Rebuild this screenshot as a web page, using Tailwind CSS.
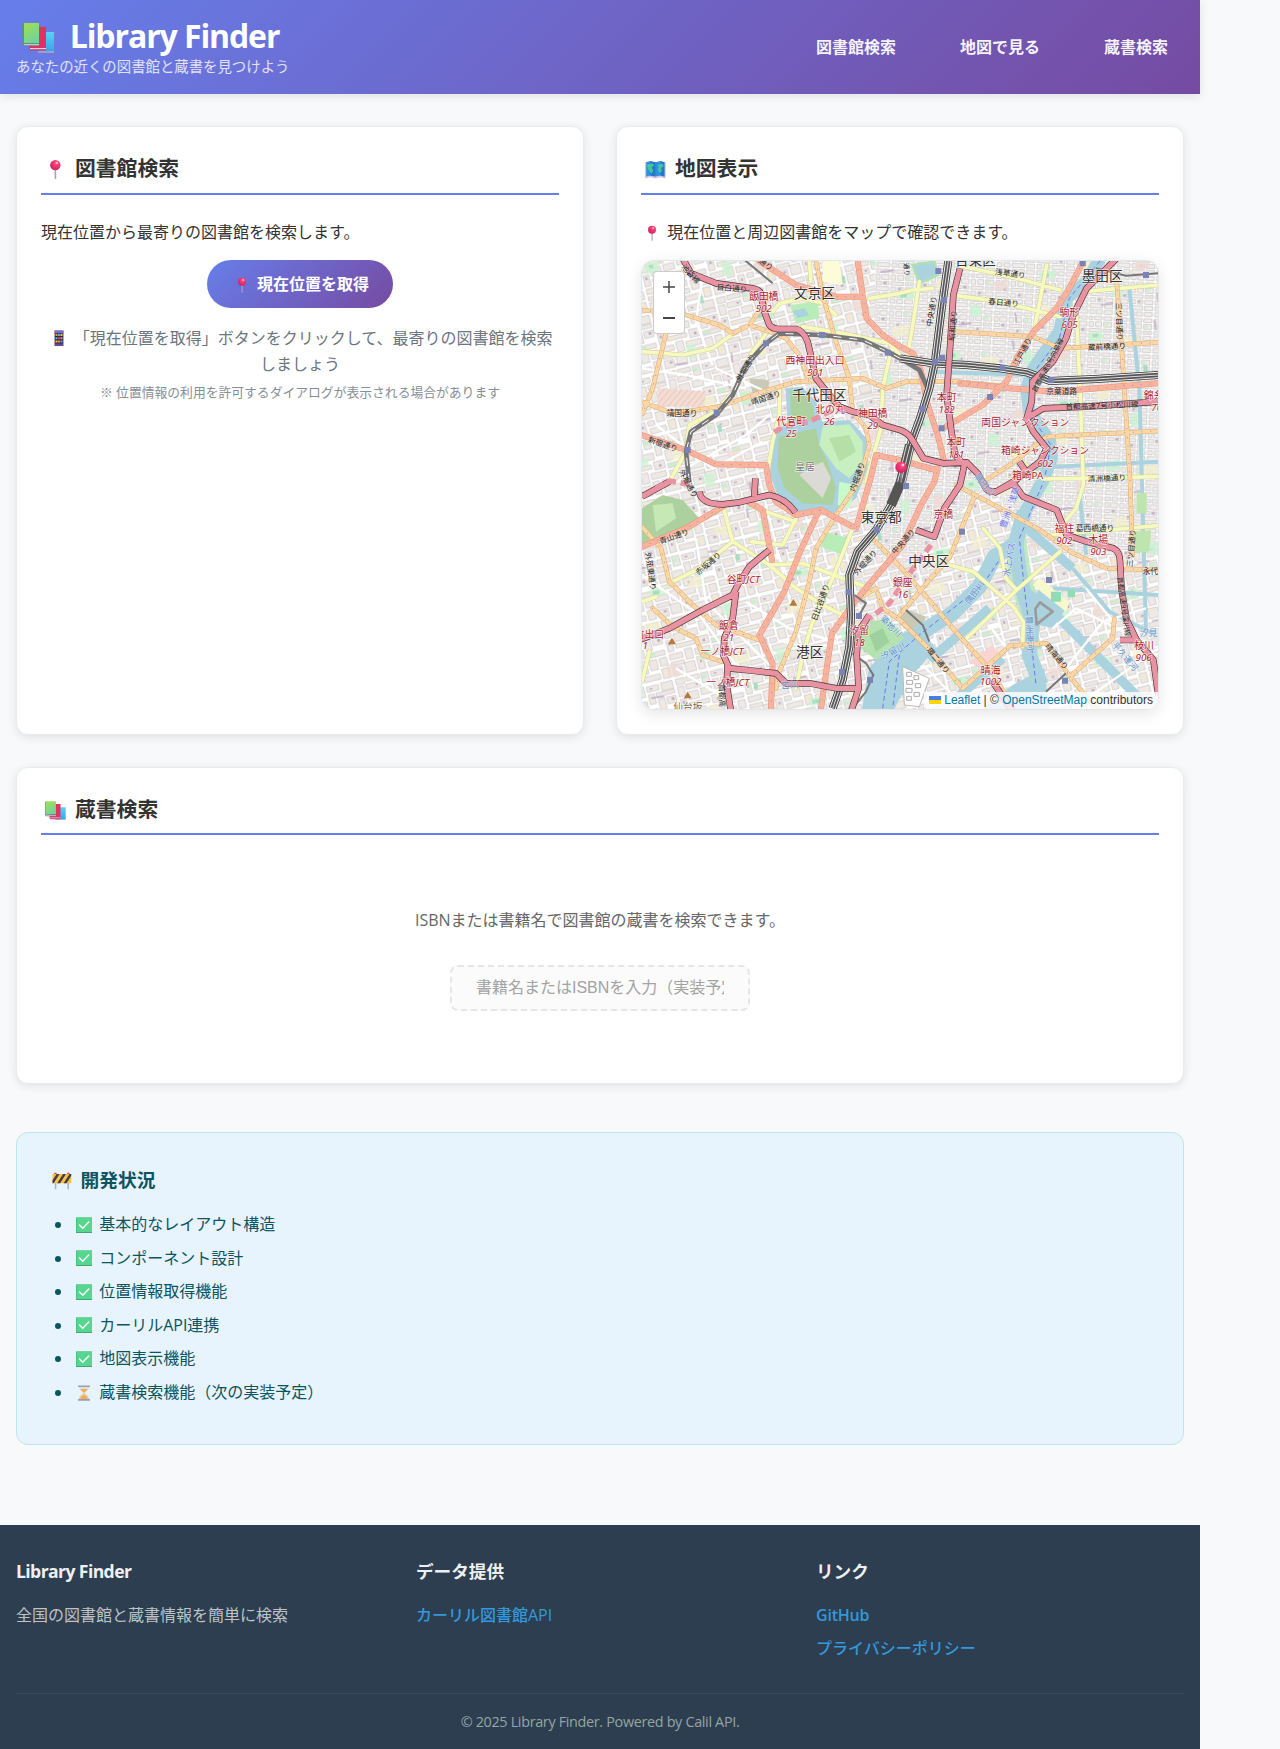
<!DOCTYPE html>
<html lang="ja">
<head>
<meta charset="utf-8">
<title>Library Finder</title>
<script src="https://cdn.jsdelivr.net/npm/@tailwindcss/browser@4"></script>
</head>
<body class="bg-[#f8f9fa] text-[#333] text-base leading-[1.6] font-['Open_Sans','Noto_Sans_CJK_JP',sans-serif]">
<svg class="absolute h-0 w-0">
  <defs>
    <linearGradient id="gGreen" x1="0" y1="0" x2="0.4" y2="1"><stop offset="0" stop-color="#a4e04c"/><stop offset="1" stop-color="#6fd49a"/></linearGradient>
    <linearGradient id="gBlue" x1="0" y1="0" x2="0" y2="1"><stop offset="0" stop-color="#55d5f5"/><stop offset="1" stop-color="#3aa5ea"/></linearGradient>
    <radialGradient id="gBall" cx=".62" cy=".3" r=".75"><stop offset="0" stop-color="#ff7d9f"/><stop offset=".3" stop-color="#fb3c74"/><stop offset="1" stop-color="#c8215c"/></radialGradient>
    <linearGradient id="gSand" x1="0" y1="0" x2="0" y2="1"><stop offset="0" stop-color="#d9e3ec"/><stop offset="1" stop-color="#f0c48a"/></linearGradient>
    <symbol id="books" viewBox="0 0 44 32">
      <path d="M23 11h15v19H22z" fill="url(#gBlue)"/><path d="M22 30h16v2H22z" fill="#a99bc9"/>
      <path d="M14 6h16v21H13z" fill="#e5305f"/><path d="M13 26h17v3.500H14z" fill="#c9386b"/><path d="M14 27h16v1.200H14z" fill="#f0cfe0"/>
      <path d="M8 2h15v20H8z" fill="url(#gGreen)"/><path d="M6.500 3 8 2v22l-1.500-1z" fill="#4da352"/><path d="M7 22h16v3H7z" fill="#6a8a82"/><path d="M8 23h15v1.200H8z" fill="#c9c3d8"/>
    </symbol>
    <symbol id="pin" viewBox="0 0 44 32">
      <path d="M21 14h2.400v16.500l-1.200 1.500-1.200-1.500z" fill="#aaa0b6"/>
      <circle cx="22" cy="9.500" r="8" fill="url(#gBall)"/><ellipse cx="24.500" cy="6" rx="1.800" ry="1.500" fill="#ffc4d3"/>
    </symbol>
    <symbol id="map" viewBox="0 0 44 32">
      <path d="m6 5 8-2 8 2 8-2 8 2v25l-8-2-8 2-8-2-8 2z" fill="#d3c6e4"/>
      <path d="m8 5 6-1.500 8 1.500 8-1.500 6 1.500v22l-6-1.500-8 1.500-8-1.500-6 1.500z" fill="#2f8fe0"/>
      <path d="M14 3.500 22 5v22l-8-1.500zM30 3.500 36 5v22l-6-1.500z" fill="#2577c8"/>
      <path d="M10 8l8-1 2 3-4 3 3 4-3 6-3-5-3-4zM26 9l7-2 2 4-4 3 1 5-3 3-3-5 1-4z" fill="#41c7a0"/>
    </symbol>
    <symbol id="calc" viewBox="0 0 44 32">
      <path d="M13 1h18v31H13z" fill="#6a4596"/><path d="M13 1h18v5H13z" fill="#7d73bd"/><path d="M14 7h16v20H14z" fill="#30264e"/>
      <path d="M15 8h4v4h-4zM25 14.500h4v4h-4zM20 21h4v4h-4z" fill="#f09a35"/><path d="M20 8h4v4h-4zM15 14.500h4v4h-4zM25 21h4v4h-4z" fill="#4bb2ea"/><path d="M25 8h4v4h-4zM15 21h4v4h-4z" fill="#f5c93e"/><path d="M20 14.500h4v4h-4z" fill="#e84868"/>
    </symbol>
    <symbol id="barrier" viewBox="0 0 44 32">
      <path d="M10 14h2.500v17H10zM31.500 14H34v17h-2.500z" fill="#b4a8c4"/><path d="M9 3h4v4H9zM31 3h4v4h-4z" fill="#e2356d"/>
      <path d="M6 5h32v16H6z" fill="#f9c23c"/><path d="M13 5h5L8 21H6v-5zM24 5h5L19 21h-5zM35 5h3v3l-8 13h-5z" fill="#433b4f"/>
    </symbol>
    <symbol id="check" viewBox="0 0 44 32">
      <path d="M6 1h32v31H6z" fill="#3fa873"/><path d="M7 1h31v29H7z" fill="#56d68f"/>
      <path d="m13 16 6.500 6.500L31.500 10" fill="none" stroke="#fff" stroke-width="2.800" stroke-linecap="round"/>
    </symbol>
    <symbol id="sand" viewBox="0 0 44 32">
      <path d="M12 3h20c0 7-6 10-8.500 13C26 19 32 22 32 29H12c0-7 6-10 8.500-13C18 13 12 10 12 3z" fill="url(#gSand)"/>
      <path d="M15 8h14c-2 4-5 5-7 7-2-2-5-3-7-7zM15 28c1-5 5-7 7-8 2 1 6 3 7 8z" fill="#f3ac4c"/>
      <path d="M10 1h24v3H10zM10 28h24v3.500H10z" fill="#93a3b5"/>
    </symbol>
  </defs>
</svg>

<div class="w-[1200px]">
  <header class="flex h-[94px] items-center justify-between bg-[linear-gradient(135deg,#667eea_0%,#764ba2_100%)] px-4 text-white shadow-[0_2px_10px_rgba(0,0,0,0.1)]">
    <div class="flex flex-col">
      <h1 class="text-[32px] font-bold leading-[38px] tracking-[-1.1px] whitespace-nowrap"><svg class="mr-[2.500px] inline-block h-[1em] w-[1.375em] align-[-0.16em]"><use href="#books"/></svg> Library Finder</h1>
      <p class="text-[14.4px] leading-[23px] text-white/80">あなたの近くの図書館と蔵書を見つけよう</p>
    </div>
    <nav class="flex gap-8 pt-0.5 font-semibold text-white/95">
      <a class="px-4 py-2">図書館検索</a>
      <a class="px-4 py-2">地図で見る</a>
      <a class="px-4 py-2">蔵書検索</a>
    </nav>
  </header>

  <main class="px-4 pt-8">
    <div class="grid grid-cols-2 gap-8">
      <section class="h-[609px] rounded-xl border border-[#e9ecef] bg-white p-6 shadow-[0_2px_10px_rgba(0,0,0,0.1)]">
        <h2 class="mb-6 border-b-2 border-[#667eea] pt-px pb-2 text-[20.8px] font-semibold leading-[33.3px]"><svg class="inline-block h-[1em] w-[1.375em] align-[-0.16em]"><use href="#pin"/></svg> 図書館検索</h2>
        <p class="pt-px">現在位置から最寄りの図書館を検索します。</p>
        <div class="mt-3.5 flex justify-center">
          <button class="h-12 w-[186px] rounded-full bg-[linear-gradient(135deg,#667eea_0%,#764ba2_100%)] pt-0.5 font-semibold text-white whitespace-nowrap"><svg class="inline-block h-[1em] w-[1.375em] align-[-0.16em]"><use href="#pin"/></svg> 現在位置を取得</button>
        </div>
        <p class="mt-[17px] text-center leading-[26px] text-[#6c757d]"><svg class="inline-block h-[1em] w-[1.375em] align-[-0.16em]"><use href="#calc"/></svg> 「現在位置を取得」ボタンをクリックして、最寄りの図書館を検索しましょう</p>
        <p class="mt-[5px] text-center text-[12.8px] text-[#868e96]">※ 位置情報の利用を許可するダイアログが表示される場合があります</p>
      </section>

      <section class="h-[609px] rounded-xl border border-[#e9ecef] bg-white p-6 shadow-[0_2px_10px_rgba(0,0,0,0.1)]">
        <h2 class="mb-6 border-b-2 border-[#667eea] pt-px pb-2 text-[20.8px] font-semibold leading-[33.3px]"><svg class="inline-block h-[1em] w-[1.375em] align-[-0.16em]"><use href="#map"/></svg> 地図表示</h2>
        <p class="pt-px"><svg class="inline-block h-[1em] w-[1.375em] align-[-0.16em]"><use href="#pin"/></svg> 現在位置と周辺図書館をマップで確認できます。</p>
        <div class="relative mt-3.5 h-[450px] overflow-hidden rounded-xl border border-[#e1e8ed] shadow-[0_4px_15px_rgba(0,0,0,0.1)]">
          <!-- Map of central Tokyo; drawn at three units per pixel -->
          <svg class="block h-full w-full font-['Noto_Sans','Noto_Sans_CJK_JP',sans-serif]" viewBox="18 18 1548 1344" preserveAspectRatio="none">
            <defs>
              <pattern id="blkA" width="198" height="180" patternUnits="userSpaceOnUse" patternTransform="rotate(-14)">
                <path d="M0 0h198v180H0z" fill="#fff"/>
                <path d="M4 4h26v18H4zM36 4h40v14H36zM82 4h22v30H82zM112 6h36v16h-36zM156 4h36v24h-36zM4 28h20v30H4zM30 26h44v16H30zM112 30h18v30h-18zM136 30h56v12h-56zM30 50h32v24H30zM70 48h34v20H70zM138 50h20v32h-20zM164 50h28v20h-28zM4 66h18v34H4zM30 82h60v12H30zM98 76h32v24H98zM138 90h54v14h-54zM4 108h40v16H4zM52 102h22v32H52zM82 108h46v18H82zM138 112h24v30h-24zM170 112h22v24h-22zM4 132h40v12H4zM82 134h20v38H82zM110 134h20v14h-20zM4 150h30v24H4zM42 142h32v30H42zM112 156h50v16h-50zM170 144h22v30h-22z" fill="#eee9e4" stroke="#c6c1c3" stroke-width="2"/>
                <path d="M84 10h14v12H84zM140 92h22v9h-22z" fill="#c9efcf"/><path d="M36 84h12v8H36zM172 150h14v12h-14z" fill="#f4e9c8"/>
                <path d="M60 30h7v5h-7zM120 12h9v4h-9zM10 72h6v9h-6zM112 86h8v8h-8zM178 54h8v8h-8zM20 155h9v6h-9zM90 145h5v8h-5z" fill="#bda8c2"/>
              </pattern>
              <pattern id="blkB" width="120" height="108" patternUnits="userSpaceOnUse" patternTransform="rotate(3)">
                <path d="M0 0h120v108H0z" fill="#fff"/>
                <path d="M3 3h16v11H3zM24 3h18v11H24zM48 3h10v11H48zM64 3h22v11H64zM92 3h24v11H92zM3 20h12v14H3zM20 20h22v14H20zM48 20h14v14H48zM68 20h18v14H68zM92 20h24v14H92zM3 40h18v10H3zM26 40h16v10H26zM48 40h38v10H48zM92 40h10v10H92zM107 40h9v10h-9zM3 56h39v12H3zM48 56h16v12H48zM70 56h16v12H70zM92 56h24v12H92zM3 74h15v12H3zM24 74h18v12H24zM48 74h38v12H48zM92 74h24v12H92zM3 92h39v12H3zM48 92h15v12H48zM68 92h18v12H68zM92 92h24v12H92z" fill="#f3eeeb" stroke="#bdb9bc" stroke-width="2"/>
                <path d="M26 42h9v5h-9zM72 58h7v6h-7z" fill="#bba8be"/><path d="M94 22h12v9H94z" fill="#cdf0d2"/>
              </pattern>
              <pattern id="scatter" width="430" height="390" patternUnits="userSpaceOnUse" patternTransform="rotate(-8)">
                <path d="M20 30h42v30H20zM250 60h28v40h-28zM330 220h50v22h-50zM110 290h30v36h-30z" fill="#c8f4cf"/><path d="M33 36h14v10H33zM338 226h20v12h-20zM170 150h12v20h-12z" fill="#94d9b5"/>
                <path d="M120 60h50v26h-50zM20 200h38v34H20zM300 320h48v32h-48z" fill="#f3efcf"/><path d="M350 60h34v40h-34zM190 230h40v26h-40z" fill="#efd9d4"/>
                <path d="M90 130h30v5H90zM220 20h6v28h-6zM290 150h40v6h-40zM70 340h38v6H70zM240 330h5v30h-5z" fill="#bca8c4"/>
              </pattern>
              <pattern id="hatch" width="14" height="14" patternUnits="userSpaceOnUse" patternTransform="rotate(40)"><path d="M0 0h14v14H0z" fill="#f2ddd5"/><path d="M0 0h2v14H0z" fill="#efb9ad"/></pattern>
              <path id="secondary" d="M18 290 140 300 230 280 300 230M410 170 430 145 500 130 560 145 600 180M410 210 350 290 300 400 240 470 160 510 150 590 100 680M430 400 430 480 410 560 395 650M500 215 620 235 760 265 792 300M770 265 740 400 735 520 690 680M520 18 525 80M700 130 792 115 830 105 890 100M850 80 832 200 815 300M962 30 1142 70 1272 105M962 122 1092 140 1272 185M1232 30 1192 240M1342 110 1567 90M1320 150 1332 400 1342 690 1320 760 1270 820M1122 590 1222 672 1567 665M1242 840 1567 812M1272 890 1142 1005 992 1150M942 930 1012 950 1132 1055 1162 1100 1160 1175M1042 820 1092 880 1110 970 1142 1005M100 985 190 940 290 860 260 750M290 860 400 930 500 925 620 970 700 1000M400 930 480 1000 560 1050 640 1090M360 760 480 800M345 860 440 870 480 790M650 820 590 970 530 1100 500 1200 480 1300M18 1040 60 1025M18 1280 40 1190"/>
              <path id="primary" d="M18 440 110 475 180 465 250 455 380 410 480 380 680 370 750 400 810 380 962 380 1112 395M18 165 150 180 250 210 290 235 340 210 400 230 450 250 490 300 520 380M340 210 375 160 400 120M90 235 50 400 20 475M540 18 560 120 600 260 640 370 650 470 690 520 700 570 670 680 600 780 540 880 520 980 480 1130 430 1250 420 1300M18 815 75 880 100 980 170 1050 240 1110 370 1155M50 1060 110 1115 180 1150 200 1200 260 1220M952 230 1192 245 1272 280 1567 262M1042 680 1122 630 1232 545 1567 528M1442 80 1460 320 1482 675 1490 900M960 690 1122 775 1212 825 1312 895 1412 940 1567 945M1015 725 942 905 850 1010 792 1080M700 840 792 935 862 1015 972 1145 1072 1255M660 1035 720 1000 740 1060 792 1095 882 1185 980 1300 1122 1172 1232 1165 1302 1265 1380 1360M1302 1265 1430 1150 1435 1090M1072 1255 1130 1360"/>
              <path id="trunk" d="M370 18 480 90 600 125 680 125M665 18 680 120 692 190 740 240 792 275 832 295 855 350 875 450 905 540 925 620M18 540 150 585 240 628 390 630 400 690 420 740 480 780 555 765 650 815M550 765 490 895 445 1010 370 1140 410 1225 405 1360M18 875 150 820 260 755M335 740 380 765 408 915M555 1360 575 1220 588 1135 660 1035 800 870 855 750 895 680 905 640M662 815 705 665 720 600 790 615 900 645M1342 18 1300 100 1262 160 1192 230 1142 310 1112 380 1040 450 930 515M972 385 1122 400 1252 410 1567 385"/>
              <path id="rail" d="M792 310 892 325 992 330 1092 340 1172 352 1242 378 1380 372 1567 360M937 18 917 160 897 320 880 400 852 490 812 600 790 690 765 750 720 825 665 890 640 960 645 1080 640 1175 620 1275 590 1360"/>
              <path id="motorway" d="M140 10 165 55 240 85 350 100Q375 105 375 120L385 170 400 210Q410 222 430 222L480 222Q500 225 515 260L540 370 580 420 610 455 650 470 700 480 740 510 792 525Q820 535 832 560L862 610 922 625 992 622 1025 655 1050 700Q1060 715 1085 708L1132 685 1162 725 1262 765 1292 840 1352 860 1432 880Q1452 890 1452 920L1457 1005 1472 1095 1502 1155 1552 1215 1567 1320M972 40 952 120 942 280 932 420 945 520 957 600 985 630 972 690 925 760 895 845 840 825M1442 10 1352 100 1312 180 1290 250 1250 320 1190 380 1187 440 1172 490 1192 530 1232 580 1212 620 1140 675 1072 715M1172 490 1222 460 1352 455 1567 440M18 725 100 680M190 710Q195 748 260 748L310 742 400 720Q450 730 478 772M358 670 355 725M10 1155 100 1120 200 1065 290 1020 305 990 340 935 400 885M300 1010 290 1090 265 1150 262 1200 280 1240 330 1245 420 1255 450 1285 520 1285 600 1300 665 1300M275 1230 272 1290 285 1370M700 1080 667 1130 662 1200 668 1300 645 1370M1070 1280 1130 1370M1150 620 1170 650M1452 1155 1502 1155"/>
            </defs>
            <path d="M0 0h1600v1400H0z" fill="url(#blkA)"/>
            <path d="M720 0H1600V900H1250L1050 690 830 930 700 900z" fill="url(#blkB)"/>
            <path d="M0 0h1600v1400H0z" fill="url(#scatter)" opacity=".75"/>
            <path d="M65 400 210 408 205 455H65z" fill="url(#hatch)"/>
            <path d="M18 760 80 720 140 735 190 790 150 815 18 870z" fill="#add19e"/>
            <path d="M50 750 110 745 120 790 60 830z" fill="#c5e8b5"/>
            <path d="M462 150 545 140 550 190 480 205zM565 830 640 850 620 900 555 875z" fill="#b8ecb9"/><path d="M470 168 505 160 520 180 485 190z" fill="#aad3df"/>
            <path d="M560 18 610 18 620 90 560 80z" fill="#fdfcd8"/><path d="M340 370 400 375 395 425 350 415zM792 1055 870 1085 850 1130 792 1110z" fill="#c9c9b8"/>
            <path d="M830 30 895 20 905 60 850 85z" fill="#aad3df" stroke="#aee0b5" stroke-width="8"/>
            <!-- Imperial palace grounds and moats -->
            <path d="M448 400 500 395 540 440 560 500 640 495 692 550 695 640 660 730 600 775 540 765 480 770 430 735 402 660 412 540 455 500z" fill="#aad3df"/>
            <path d="M462 405 500 410 530 450 535 500 465 490zM428 545 540 520 550 570 575 620 600 700 590 750 500 745 445 700 425 640z" fill="#add19e"/>
            <path d="M560 515 640 508 680 560 680 620 640 670 600 640 550 570z" fill="#c8efc0"/><path d="M580 550 640 540 660 590 610 620z" fill="#b6dfa8"/>
            <path d="M520 640 560 620 585 670 560 730 520 690 490 660z" fill="#dcdad6"/><path d="M610 680 660 690 640 760 605 750z" fill="#c8facc"/>
            <!-- Rivers, canals and the bay -->
            <g fill="none" stroke="#aad3df" stroke-linejoin="round">
              <path stroke="#bfe8c4" stroke-width="66" d="M1137 850 1150 950 1190 1100"/>
              <path stroke-width="38" d="M1392 10 1352 80 1292 130 1270 230 1192 340 1172 400 1180 470 1242 560 1247 610 1222 675 1165 775 1137 860"/>
              <path stroke-width="46" d="M1165 770 1137 870 1075 905 1030 995 950 1075 850 1135 792 1175 720 1250 700 1370"/>
              <path stroke-width="46" d="M1137 850 1150 950 1162 1010 1190 1100 1180 1200 1215 1290"/>
              <path stroke-width="28" d="M1170 1010 1250 1070 1350 1170 1520 1340M1150 800 1240 880 1310 940M880 1215 980 1130 1060 1060M960 1330 1100 1210"/>
              <path stroke-width="12" d="M900 350 1160 360M1170 640 1567 620M1480 100 1510 400 1530 1130M1250 1000 1567 1020M1310 940 1420 1070 1560 1140M1330 710 1350 900"/>
            </g>
            <path d="M1215 985 1290 1060 1250 1120 1170 1100zM1225 1240 1240 1370 1030 1370 1130 1290zM740 1150 850 1120 900 1180 830 1260 770 1370 680 1370 710 1240z" fill="#aad3df"/>
            <path d="M800 1235 880 1270 850 1355 805 1350z" fill="#fff" stroke="#bbb" stroke-width="3"/><path d="M812 1252h14v12h-14zM834 1262h14v12h-14zM812 1276h18v12h-18zM838 1286h16v12h-16zM810 1300h18v12h-18zM834 1312h16v12h-16zM812 1324h14v12h-14z" fill="none" stroke="#aaa" stroke-width="3"/>
            <path d="M680 1105 755 1090 805 1150 720 1215 675 1180z" fill="#b5e3b0"/><path d="M700 1140 740 1120 760 1160 720 1190z" fill="#9fd0a0"/>
            <path d="M1198 1062 1212 1042 1250 1070 1202 1108z" fill="none" stroke="#9b9b9b" stroke-width="8" stroke-linejoin="round"/>
            <path d="M1210 970 1300 1040 1290 1070 1190 990z" fill="#f7f8cc"/><path d="M1245 1010h30v30h-30zM1295 1005h22v22h-22z" fill="#8fdcb5"/>
            <path d="M1502 715h30v60h-30zM1492 830 1545 825 1540 890 1498 895z" fill="#bfe5af"/>
            <path d="M1000 1220 1070 1170 1090 1200 1030 1240z" fill="#f9d4d0"/>
            <path fill="none" stroke="#6a74f0" stroke-width="3" stroke-dasharray="14 9" d="M1392 18 1300 130 1270 250 1180 370 1190 490 1245 570 1225 675 1150 850 1165 1000 1190 1200 1200 1290M1100 900 1040 990 850 1140 760 1220 740 1360M790 1200 770 1360"/>
            <!-- Minor streets -->
            <path fill="none" stroke="#fff" stroke-width="7" d="M18 340 150 360 330 400M200 60 180 200 230 330M60 510 230 640 380 560M240 340 390 410M150 640 330 540 400 480M18 960 190 1080 300 1230M120 1240 300 1350M330 1040 460 1120 600 1160M420 880 460 980 420 1060M1290 1240 1400 1100 1530 1060M1250 1120 1320 1060 1567 1180M1310 1360 1567 1180M1060 1110 1110 1180M1350 1000 1440 1110M860 1230 1000 1370M180 850 210 1040 400 1230M440 1160 530 1180 620 1160"/>
            <g fill="none" stroke-linejoin="round" stroke-linecap="round">
              <use href="#secondary" stroke="#cfd09c" stroke-width="14"/><use href="#secondary" stroke="#f7fabf" stroke-width="11"/>
              <use href="#primary" stroke="#d9ad74" stroke-width="14"/><use href="#primary" stroke="#fcd6a4" stroke-width="11"/>
              <use href="#trunk" stroke="#e8927c" stroke-width="18"/><use href="#trunk" stroke="#f9b29c" stroke-width="15"/>
              <g stroke="#8d86b8" stroke-width="3" stroke-dasharray="0 26"><use href="#primary"/><use href="#trunk"/></g>
            </g>
            <g fill="none" stroke-linejoin="round">
              <path stroke="#77777a" stroke-width="14" d="M160 680 150 590 165 530 240 480 290 420 330 330 390 265 430 235 560 240 680 255 755 290 792 310 892 325M792 310 850 345 875 400"/>
              <path stroke="#fff" stroke-width="3" stroke-dasharray="24 24" d="M160 680 150 590 165 530 240 480 290 420 330 330 390 265 430 235 560 240 680 255 755 290 792 310"/>
              <use href="#rail" stroke="#333" stroke-width="24"/><use href="#rail" stroke="#f2f2f2" stroke-width="19"/><use href="#rail" stroke="#555" stroke-width="13"/><use href="#rail" stroke="#ddd" stroke-width="3"/>
              <path stroke="#555" stroke-width="30" d="M822 570 795 680 765 750"/><path stroke="#ddd" stroke-width="3" d="M812 570 785 680M822 572 795 682M832 575 806 685"/>
              <path stroke="#777" stroke-width="6" d="M320 10 410 85M650 1195 690 1225 712 1260 690 1310 650 1360M655 1020 690 1045 670 1080M1230 1310 1290 1255M1380 40 1470 62 1567 55M810 1065 860 1110 880 1160"/>
              <use href="#motorway" stroke="#4e3539" stroke-width="20"/><use href="#motorway" stroke="#e892a2" stroke-width="16"/>
              <path stroke="#e892a2" stroke-width="16" stroke-dasharray="26 14" d="M415 532 440 515 520 500 590 465 610 455M60 700 100 678 170 690M885 870 825 950 760 1045 700 1090"/>
            </g>
            <path fill="#7b82b5" d="M381 256h18v18h-18zM549 231h18v18h-18zM233 464h18v18h-18zM146 576h18v18h-18zM747 284h18v18h-18zM898 39h18v18h-18zM915 126h18v18h-18zM888 311h18v18h-18zM910 299h18v18h-18zM1091 329h18v18h-18zM1236 366h18v18h-18zM1053 417h18v18h-18zM908 511h18v18h-18zM851 453h18v18h-18zM1331 16h18v18h-18zM1521 51h18v18h-18zM713 816h18v18h-18zM629 1002h18v18h-18zM660 1074h18v18h-18zM609 1242h18v18h-18zM693 1266h18v18h-18zM801 684h18v18h-18zM969 821h18v18h-18zM1230 966h18v18h-18zM1278 1268h18v18h-18z"/>
            <path fill="#b5793a" d="m108 1148 12 20H96zM155 1310l12 20h-24zM472 1032l12 20h-24z"/>

            <g font-size="23" fill="#222" text-anchor="middle" stroke="#fff" stroke-opacity=".25" stroke-width="3" paint-order="stroke">
              <text transform="translate(287 108) rotate(5)">目白通り</text><text transform="translate(158 62) rotate(48)">池袋線</text><text transform="translate(385 34) rotate(35)">通り</text>
              <text transform="translate(336 342) rotate(-58)">外堀通り</text><text transform="translate(392 436) rotate(-18)">靖国通り</text><text transform="translate(138 482)">靖国通り</text>
              <text transform="translate(78 575) rotate(19)">新宿通り</text><text transform="translate(672 668) rotate(-70)">内堀通り</text><text transform="translate(150 690) rotate(62)">外堀通り</text>
              <text transform="translate(895 170) rotate(-80)">中央通り</text><text transform="translate(959 212) rotate(-85)">昭和通り</text><text transform="translate(1122 64) rotate(8)">浅草通り</text>
              <text transform="translate(1102 151) rotate(5)">春日通り</text><text transform="translate(1167 294) rotate(-62)">江戸通り</text><text transform="translate(1413 283) rotate(-3)">蔵前橋通り</text>
              <text transform="translate(1441 200) rotate(88)">三ツ目通り</text><text transform="translate(1242 334) rotate(-62)" font-size="21">首都高速6号向島線</text><text transform="translate(1277 418)">京葉道路</text>
              <text transform="translate(1398 460) rotate(-2)">首都高速7号小松川線</text><text transform="translate(1413 678) rotate(-2)">清洲橋通り</text><text transform="translate(1377 827)">葛西橋通り</text>
              <text transform="translate(1494 880) rotate(-85)">三ツ目通り</text><text transform="translate(1543 956)">永代</text><text transform="translate(1456 1055) rotate(82)" font-size="21">首都高速9号深川線</text>
              <text transform="translate(1256 1210) rotate(50)">晴海通り</text><text transform="translate(900 1222) rotate(50)">環二通り</text><text transform="translate(117 852) rotate(-20)">青山通り</text>
              <text transform="translate(222 932) rotate(-40)">赤坂通り</text><text transform="translate(36 950) rotate(82)">外苑東通り</text><text transform="translate(561 1045) rotate(-70)">日比谷通り</text>
              <text transform="translate(694 928) rotate(-48)">外堀通り</text><text transform="translate(808 865) rotate(-48)">中央通り</text><text transform="translate(250 1322) rotate(88)">首都高</text><text transform="translate(805 44) rotate(85)" font-size="20">通り</text>
            </g>
            <g font-size="26" fill="#5f94c8" text-anchor="middle" stroke="#fff" stroke-opacity=".5" stroke-width="3" paint-order="stroke">
              <text transform="translate(1024 1018) rotate(-55)">隅田川</text><text transform="translate(758 1120) rotate(45)">築地川</text><text transform="translate(775 1196) rotate(-28)">汐留川</text><text x="462" y="1300">古川</text>
              <text transform="translate(1172 1135) rotate(88)">豊洲運河</text><text x="1538" y="1144">汐見</text><text transform="translate(1460 1210) rotate(50)">平久運河</text><text transform="translate(1038 695) rotate(50)">隅田川</text>
              <g fill="#6a74e8"><text transform="translate(1128 915) rotate(-80)">水上バス</text><text transform="translate(1130 760) rotate(-70)">豊洲・浅草</text></g>
            </g>
            <g font-size="29.500" fill="#ad1b2e" text-anchor="middle" stroke="#fff" stroke-opacity=".75" stroke-width="4" paint-order="stroke">
              <text x="383" y="135">飯田橋</text><text x="537" y="327">西神田出入口</text><text x="582" y="475">北の丸</text><text x="466" y="510">代官町</text><text x="710" y="486">神田橋</text>
              <text x="1300" y="183">駒形</text><text x="932" y="438">本町</text><text x="960" y="574">本町</text><text x="1168" y="512">両国ジャンクション</text><text x="1227" y="598">箱崎ジャンクション</text><text x="1175" y="673">箱崎PA</text>
              <text x="1553" y="431">錦糸</text><text x="1285" y="830">福住</text><text x="1387" y="865">木場</text><text x="1524" y="1183">枝川</text><text x="1064" y="1257">晴海</text><text x="922" y="790">京橋</text><text x="800" y="994">銀座</text>
              <text x="670" y="1137">汐留</text><text x="322" y="983">谷町<tspan font-style="italic">JCT</tspan></text><text x="278" y="1121">飯倉</text><text x="258" y="1200">一ノ橋<tspan font-style="italic">JCT</tspan></text><text x="275" y="1294">一ノ橋<tspan font-style="italic">JCT</tspan></text><text x="40" y="1150">前出口</text>
              <g font-style="italic"><text x="383" y="170">502</text><text x="537" y="362">501</text><text x="580" y="511">26</text><text x="466" y="545">25</text><text x="710" y="521">29</text><text x="1301" y="218">605</text><text x="932" y="473">182</text><text x="960" y="610">181</text><text x="1227" y="636">602</text><text x="1562" y="468">76</text><text x="1285" y="867">902</text><text x="1387" y="900">903</text><text x="1523" y="1218">906</text><text x="1064" y="1291">1002</text><text x="800" y="1029">16</text><text x="670" y="1173">18</text><text x="278" y="1157">21</text><text x="28" y="1183">1</text></g>
            </g>
            <g font-size="41" fill="#333" stroke="#fff" stroke-opacity=".7" stroke-width="4" paint-order="stroke">
              <text x="474" y="129">文京区</text><text x="468" y="434">千代田区</text><text x="957" y="30">台東区</text><text x="1337" y="78">墨田区</text><text x="674" y="800">東京都</text><text x="817" y="932">中央区</text><text x="480" y="1205">港区</text>
              <text x="478" y="645" font-size="29" fill="#777">皇居</text><text x="112" y="1364" font-size="29" fill="#7b6550">仙台坂</text>
            </g>
            <path d="M793 640h5v38h-5z" fill="#8c8299"/><circle cx="795" cy="637" r="17" fill="url(#gBall)"/><circle cx="801" cy="630" r="4" fill="#ffd0dc"/>
          </svg>
          <div class="absolute left-[11px] top-[10px] flex h-[63px] w-8 flex-col rounded-[4px] border border-black/20 bg-white">
            <button class="flex h-[31px] items-center justify-center"><svg class="h-3 w-3" viewBox="0 0 12 12"><path d="M0 6h12M6 0v12" stroke="#464646" stroke-width="1.500"/></svg></button>
            <button class="flex h-[30px] items-center justify-center"><svg class="h-3 w-3" viewBox="0 0 12 12"><path d="M0 6h12" stroke="#464646" stroke-width="1.800"/></svg></button>
          </div>
          <div class="absolute bottom-0 right-0 flex h-[17px] w-[234px] items-center justify-end bg-white/80 pr-[5px] font-['Liberation_Sans',sans-serif] text-[12px] leading-[17px] whitespace-pre"><svg class="mr-[3px] h-2 w-3" viewBox="0 0 12 8"><path fill="#4c7be1" d="M0 0h12v4H0z"/><path fill="#ffd500" d="M0 4h12v4H0z"/></svg><span class="text-[#0078a8]">Leaflet</span><span> | © </span><span class="text-[#0078a8]">OpenStreetMap</span><span> contributors</span></div>
        </div>
      </section>
    </div>

    <section class="mt-8 h-[317px] rounded-xl border border-[#e9ecef] bg-white p-6 shadow-[0_2px_10px_rgba(0,0,0,0.1)]">
      <h2 class="border-b-2 border-[#667eea] pt-px pb-[7px] text-[20.8px] font-semibold leading-[33.3px]"><svg class="inline-block h-[1em] w-[1.375em] align-[-0.16em]"><use href="#books"/></svg> 蔵書検索</h2>
      <div class="flex flex-col items-center pt-[73px] text-[#666]">
        <p>ISBNまたは書籍名で図書館の蔵書を検索できます。</p>
        <div class="mt-[31px] h-[46px] w-[300px] rounded-lg border-2 border-dashed border-[#e6e6e6] bg-[#fbfbfb] px-6"><div class="h-[42px] overflow-hidden whitespace-nowrap leading-[42px] text-[#a3a3a3] font-['Liberation_Sans','Noto_Sans_CJK_JP',sans-serif]">書籍名またはISBNを入力（実装予定）</div></div>
      </div>
    </section>

    <section class="mt-12 h-[313px] rounded-xl border border-[#bee5eb] bg-[#e7f3fd] p-8 text-[#0c5460]">
      <h3 class="mb-[17px] text-[18.72px] font-bold leading-[30px]"><svg class="mr-px inline-block h-[1em] w-[1.375em] align-[-0.16em]"><use href="#barrier"/></svg> 開発状況</h3>
      <ul class="flex list-disc flex-col gap-2 pl-6">
        <li><svg class="inline-block h-[1em] w-[1.375em] align-[-0.16em]"><use href="#check"/></svg> 基本的なレイアウト構造</li>
        <li><svg class="inline-block h-[1em] w-[1.375em] align-[-0.16em]"><use href="#check"/></svg> コンポーネント設計</li>
        <li><svg class="inline-block h-[1em] w-[1.375em] align-[-0.16em]"><use href="#check"/></svg> 位置情報取得機能</li>
        <li><svg class="inline-block h-[1em] w-[1.375em] align-[-0.16em]"><use href="#check"/></svg> カーリルAPI連携</li>
        <li><svg class="inline-block h-[1em] w-[1.375em] align-[-0.16em]"><use href="#check"/></svg> 地図表示機能</li>
        <li><svg class="inline-block h-[1em] w-[1.375em] align-[-0.16em]"><use href="#sand"/></svg> 蔵書検索機能（次の実装予定）</li>
      </ul>
    </section>
  </main>

  <footer class="mt-20 h-[224px] bg-[#2c3e50] px-4 pt-8">
    <div class="grid h-[136px] grid-cols-3 gap-8">
      <div>
        <h4 class="mb-[18px] text-[17.6px] font-bold leading-7 tracking-[-0.6px] text-[#ecf0f1]">Library Finder</h4>
        <p class="text-[#bdc3c7]">全国の図書館と蔵書情報を簡単に検索</p>
      </div>
      <div>
        <h4 class="mb-[18px] text-[17.6px] font-bold leading-7 text-[#ecf0f1]">データ提供</h4>
        <a class="block font-medium text-[#3498db]">カーリル図書館API</a>
      </div>
      <div>
        <h4 class="mb-[18px] text-[17.6px] font-bold leading-7 text-[#ecf0f1]">リンク</h4>
        <div class="flex flex-col gap-[7px] font-medium text-[#3498db]"><a class="font-semibold tracking-[-0.2px]">GitHub</a><a>プライバシーポリシー</a></div>
      </div>
    </div>
    <div class="border-t border-[#34495e] pt-4 text-center text-[14.4px] leading-[23px] tracking-[-0.33px] text-[#95a5a6]">© 2025 Library Finder. Powered by Calil API.</div>
  </footer>
</div>
</body>
</html>
